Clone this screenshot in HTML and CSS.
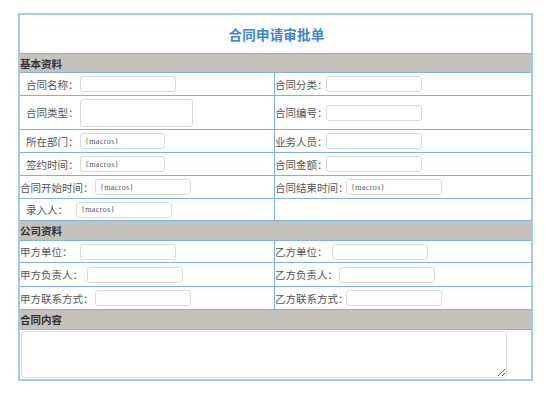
FILE: index.html
```html
<!DOCTYPE html>
<html lang="zh-CN">
<head>
<meta charset="utf-8">
<title>合同申请审批单</title>
<link rel="stylesheet" href="styles.css">
</head>
<body>
<div class="sheet">
  <div class="title">合同申请审批单</div>

  <div class="section">基本资料</div>
  <div class="row h22">
    <div class="cell"><span class="lab pad w60">合同名称：</span><input class="inp w96" type="text"></div>
    <div class="cell"><span class="lab w51">合同分类：</span><input class="inp w96" type="text"></div>
  </div>
  <div class="row h33">
    <div class="cell"><span class="lab pad w60">合同类型：</span><input class="inp big" type="text"></div>
    <div class="cell"><span class="lab w51">合同编号：</span><input class="inp w96" type="text"></div>
  </div>
  <div class="row h22">
    <div class="cell"><span class="lab pad w60">所在部门：</span><input class="inp w85 macro" type="text" value="{macros}"></div>
    <div class="cell"><span class="lab w51">业务人员：</span><input class="inp w96" type="text"></div>
  </div>
  <div class="row h22">
    <div class="cell"><span class="lab pad w60">签约时间：</span><input class="inp w85 macro" type="text" value="{macros}"></div>
    <div class="cell"><span class="lab w51">合同金额：</span><input class="inp w96" type="text"></div>
  </div>
  <div class="row h22">
    <div class="cell"><span class="lab w75">合同开始时间：</span><input class="inp w96 macro" type="text" value="{macros}"></div>
    <div class="cell"><span class="lab w71">合同结束时间：</span><input class="inp w96 macro" type="text" value="{macros}"></div>
  </div>
  <div class="row h21">
    <div class="cell"><span class="lab pad w56">录入人：</span><input class="inp w96 macro" type="text" value="{macros}"></div>
    <div class="cell"></div>
  </div>

  <div class="section s19">公司资料</div>
  <div class="row h21">
    <div class="cell"><span class="lab w60">甲方单位：</span><input class="inp w96" type="text"></div>
    <div class="cell"><span class="lab w57">乙方单位：</span><input class="inp w96" type="text"></div>
  </div>
  <div class="row h23">
    <div class="cell"><span class="lab w67">甲方负责人：</span><input class="inp w96" type="text"></div>
    <div class="cell"><span class="lab w64">乙方负责人：</span><input class="inp w96" type="text"></div>
  </div>
  <div class="row h22">
    <div class="cell"><span class="lab w75">甲方联系方式：</span><input class="inp w96" type="text"></div>
    <div class="cell"><span class="lab w71">乙方联系方式：</span><input class="inp w96" type="text"></div>
  </div>

  <div class="section s19">合同内容</div>
  <div class="content">
    <textarea class="area"></textarea>
  </div>
</div>
</body>
</html>
```

FILE: styles.css
```css
html, body {
  margin: 0;
  padding: 0;
  background: #ffffff;
}

body {
  padding: 13px 0 0 18px;
  font-family: "Noto Sans CJK SC", "DejaVu Sans", sans-serif;
}

.sheet {
  width: 511px;
  border: 2px solid #a3caee;
  box-shadow: 0 1px 0 #c8c8c8;
}

.title {
  height: 38px;
  display: flex;
  align-items: center;
  justify-content: center;
  color: #3b84d6;
  font-weight: bold;
  font-size: 13.5px;
  letter-spacing: 0.2px;
  padding-left: 2px;
}

.section {
  height: 18px;
  background: #c5c1bb;
  border-top: 1px solid #7fb2e4;
  display: flex;
  align-items: center;
  font-size: 10.5px;
  font-weight: bold;
  color: #333333;
}

.section.s19 {
  height: 19px;
}

.row {
  display: grid;
  grid-template-columns: 255px 1fr;
  border-top: 1px solid #7fb2e4;
}

.h21 { height: 21px; }
.h22 { height: 22px; }
.h23 { height: 23px; }
.h33 { height: 33px; }

.cell {
  display: flex;
  align-items: center;
}

.cell:first-child {
  border-right: 1px solid #7fb2e4;
}

.lab {
  flex: none;
  box-sizing: border-box;
  font-size: 10.5px;
  color: #555555;
  white-space: nowrap;
}

.lab.pad { padding-left: 6px; }

.w51 { width: 51px; }
.w56 { width: 56px; }
.w57 { width: 57px; }
.w60 { width: 60px; }
.w64 { width: 64px; }
.w67 { width: 67px; }
.w71 { width: 71px; }
.w75 { width: 75px; }

.inp {
  flex: none;
  box-sizing: border-box;
  height: 16px;
  margin: 0;
  padding: 0 4px;
  border: 1px solid #d9d9d9;
  border-radius: 3px;
  background: #ffffff;
  outline: none;
  font-family: "Liberation Serif", serif;
  font-size: 8px;
  letter-spacing: 0.4px;
  color: #555555;
}

.inp.w96 { width: 96px; }
.inp.w85 { width: 85px; }

.inp.big {
  width: 113px;
  height: 28px;
}

.content {
  height: 50px;
  border-top: 1px solid #7fb2e4;
  padding: 1px 0 0 1px;
  box-sizing: border-box;
}

.area {
  display: block;
  box-sizing: border-box;
  width: 486px;
  height: 47px;
  margin: 0;
  border: 1px solid #dcdcdc;
  border-radius: 3px;
  background: #ffffff;
  resize: both;
  outline: none;
}
```
